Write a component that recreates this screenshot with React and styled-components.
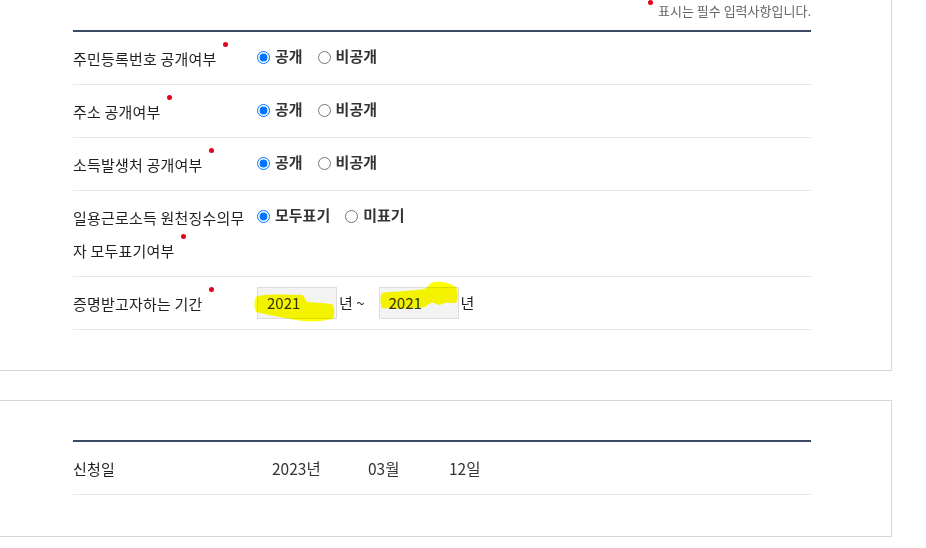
import React from 'react';
import styled, { createGlobalStyle } from 'styled-components';

const GlobalStyle = createGlobalStyle`
  html, body { margin: 0; padding: 0; background: #fff; }
  body { font-family: "Noto Sans CJK KR", "Noto Sans", sans-serif; color: #333; }
`;

const Page = styled.div`
  width: 926px;
`;

const Panel = styled.section`
  width: 892px;
  box-sizing: border-box;
  border-right: 1px solid #d6d6d6;
  border-bottom: 1px solid #d6d6d6;
  border-top: ${p => (p.$bordered ? '1px solid #d6d6d6' : 'none')};
  padding: ${p => p.$pt}px 80px ${p => p.$pb}px 73px;
  margin-top: ${p => p.$mt || 0}px;
`;

const Note = styled.div`
  text-align: right;
  font-size: 13px;
  line-height: 22px;
  color: #666;
  margin-bottom: 8px;
`;

const Dot = styled.span`
  display: inline-block;
  width: 5px;
  height: 5px;
  border-radius: 50%;
  background: #e2001a;
  vertical-align: top;
  margin-left: ${p => p.$ml || 0}px;
  margin-right: ${p => p.$mr || 0}px;
`;

const Table = styled.div`
  border-top: 2px solid #3c4a64;
`;

const Row = styled.div`
  display: grid;
  grid-template-columns: 184px 1fr;
  align-items: start;
  padding: 10px 0 9px;
  border-bottom: 1px solid #e7e7e7;
`;

const Label = styled.div`
  font-size: 15px;
  line-height: 33px;
  padding-right: 10px;
  color: #1f1f1f;
  letter-spacing: 0.2px;
`;

const Options = styled.div`
  font-size: 15px;
  line-height: 28px;
  font-weight: 700;
  color: #333;
`;

const RadioLabel = styled.label`
  margin-right: 15px;
  white-space: nowrap;
`;

const Radio = styled.input`
  width: 13px;
  height: 13px;
  margin: 0 5px 0 0;
  vertical-align: -2px;
`;

const YearField = styled.div`
  display: flex;
  align-items: center;
  font-size: 15px;
  line-height: 32px;
  color: #1f1f1f;
`;

const YearBox = styled.div`
  position: relative;
  width: 80px;
  height: 32px;
  box-sizing: border-box;
  border: 1px solid #dcdcdc;
  background: #f3f3f3;
  padding-left: 9px;
  font-size: 15px;
  line-height: 30px;
  color: #333;
`;

const Unit = styled.span`
  margin: 0 ${p => p.$mr || 0}px 0 2px;
`;

const Highlight = styled.svg`
  position: absolute;
  left: 0;
  top: 0;
  overflow: visible;
  mix-blend-mode: multiply;
  pointer-events: none;
`;

const DateCell = styled.div`
  display: flex;
  padding-left: 15px;
  font-size: 15.5px;
  line-height: 33px;
  color: #333;
`;

const DatePart = styled.span`
  width: ${p => (p.$w ? `${p.$w}px` : 'auto')};
`;

const RadioRow = ({ label, name, options }) => (
  <Row>
    <Label>
      {label}
      <Dot $ml={6} />
    </Label>
    <Options>
      {options.map((o, i) => (
        <RadioLabel key={o}>
          <Radio type="radio" name={name} defaultChecked={i === 0} />
          {o}
        </RadioLabel>
      ))}
    </Options>
  </Row>
);

export default function App() {
  return (
    <Page>
      <GlobalStyle />
      <Panel $pt={0} $pb={40}>
        <Note>
          <Dot $mr={5} />
          표시는 필수 입력사항입니다.
        </Note>
        <Table>
          <RadioRow label="주민등록번호 공개여부" name="r1" options={['공개', '비공개']} />
          <RadioRow label="주소 공개여부" name="r2" options={['공개', '비공개']} />
          <RadioRow label="소득발생처 공개여부" name="r3" options={['공개', '비공개']} />
          <RadioRow label="일용근로소득 원천징수의무자 모두표기여부" name="r4" options={['모두표기', '미표기']} />
          <Row>
            <Label>
              증명받고자하는 기간
              <Dot $ml={6} />
            </Label>
            <YearField>
              <YearBox>
                2021
                <Highlight width="80" height="32" viewBox="0 0 80 32">
                  <path
                    d="M-2,9 C2,6 20,6 44,7 C47,8 47,13 50,14 C58,15 68,15 74,16 C77,20 77,28 74,31 C66,33 56,34 46,33 C30,31 12,27 -2,24 C-4,20 -4,12 -2,9 Z"
                    fill="#ffff00"
                  />
                </Highlight>
              </YearBox>
              <Unit $mr={14}>년 ~</Unit>
              <YearBox>
                2021
                <Highlight width="80" height="32" viewBox="0 0 80 32">
                  <path
                    d="M2,5 C10,3 25,4 44,1 C48,0 49,-5 54,-6 C62,-7 70,-5 76,-1 C78,4 78,11 76,15 C70,15 66,14 62,16 C58,19 55,14 51,15 C48,16 47,19 40,20 C28,21 14,21 2,20 C0,15 0,9 2,5 Z"
                    fill="#ffff00"
                  />
                </Highlight>
              </YearBox>
              <Unit>년</Unit>
            </YearField>
          </Row>
        </Table>
      </Panel>
      <Panel $bordered $pt={39} $pb={41} $mt={29}>
        <Table>
          <Row>
            <Label>신청일</Label>
            <DateCell>
              <DatePart $w={96}>2023년</DatePart>
              <DatePart $w={81}>03월</DatePart>
              <DatePart>12일</DatePart>
            </DateCell>
          </Row>
        </Table>
      </Panel>
    </Page>
  );
}
